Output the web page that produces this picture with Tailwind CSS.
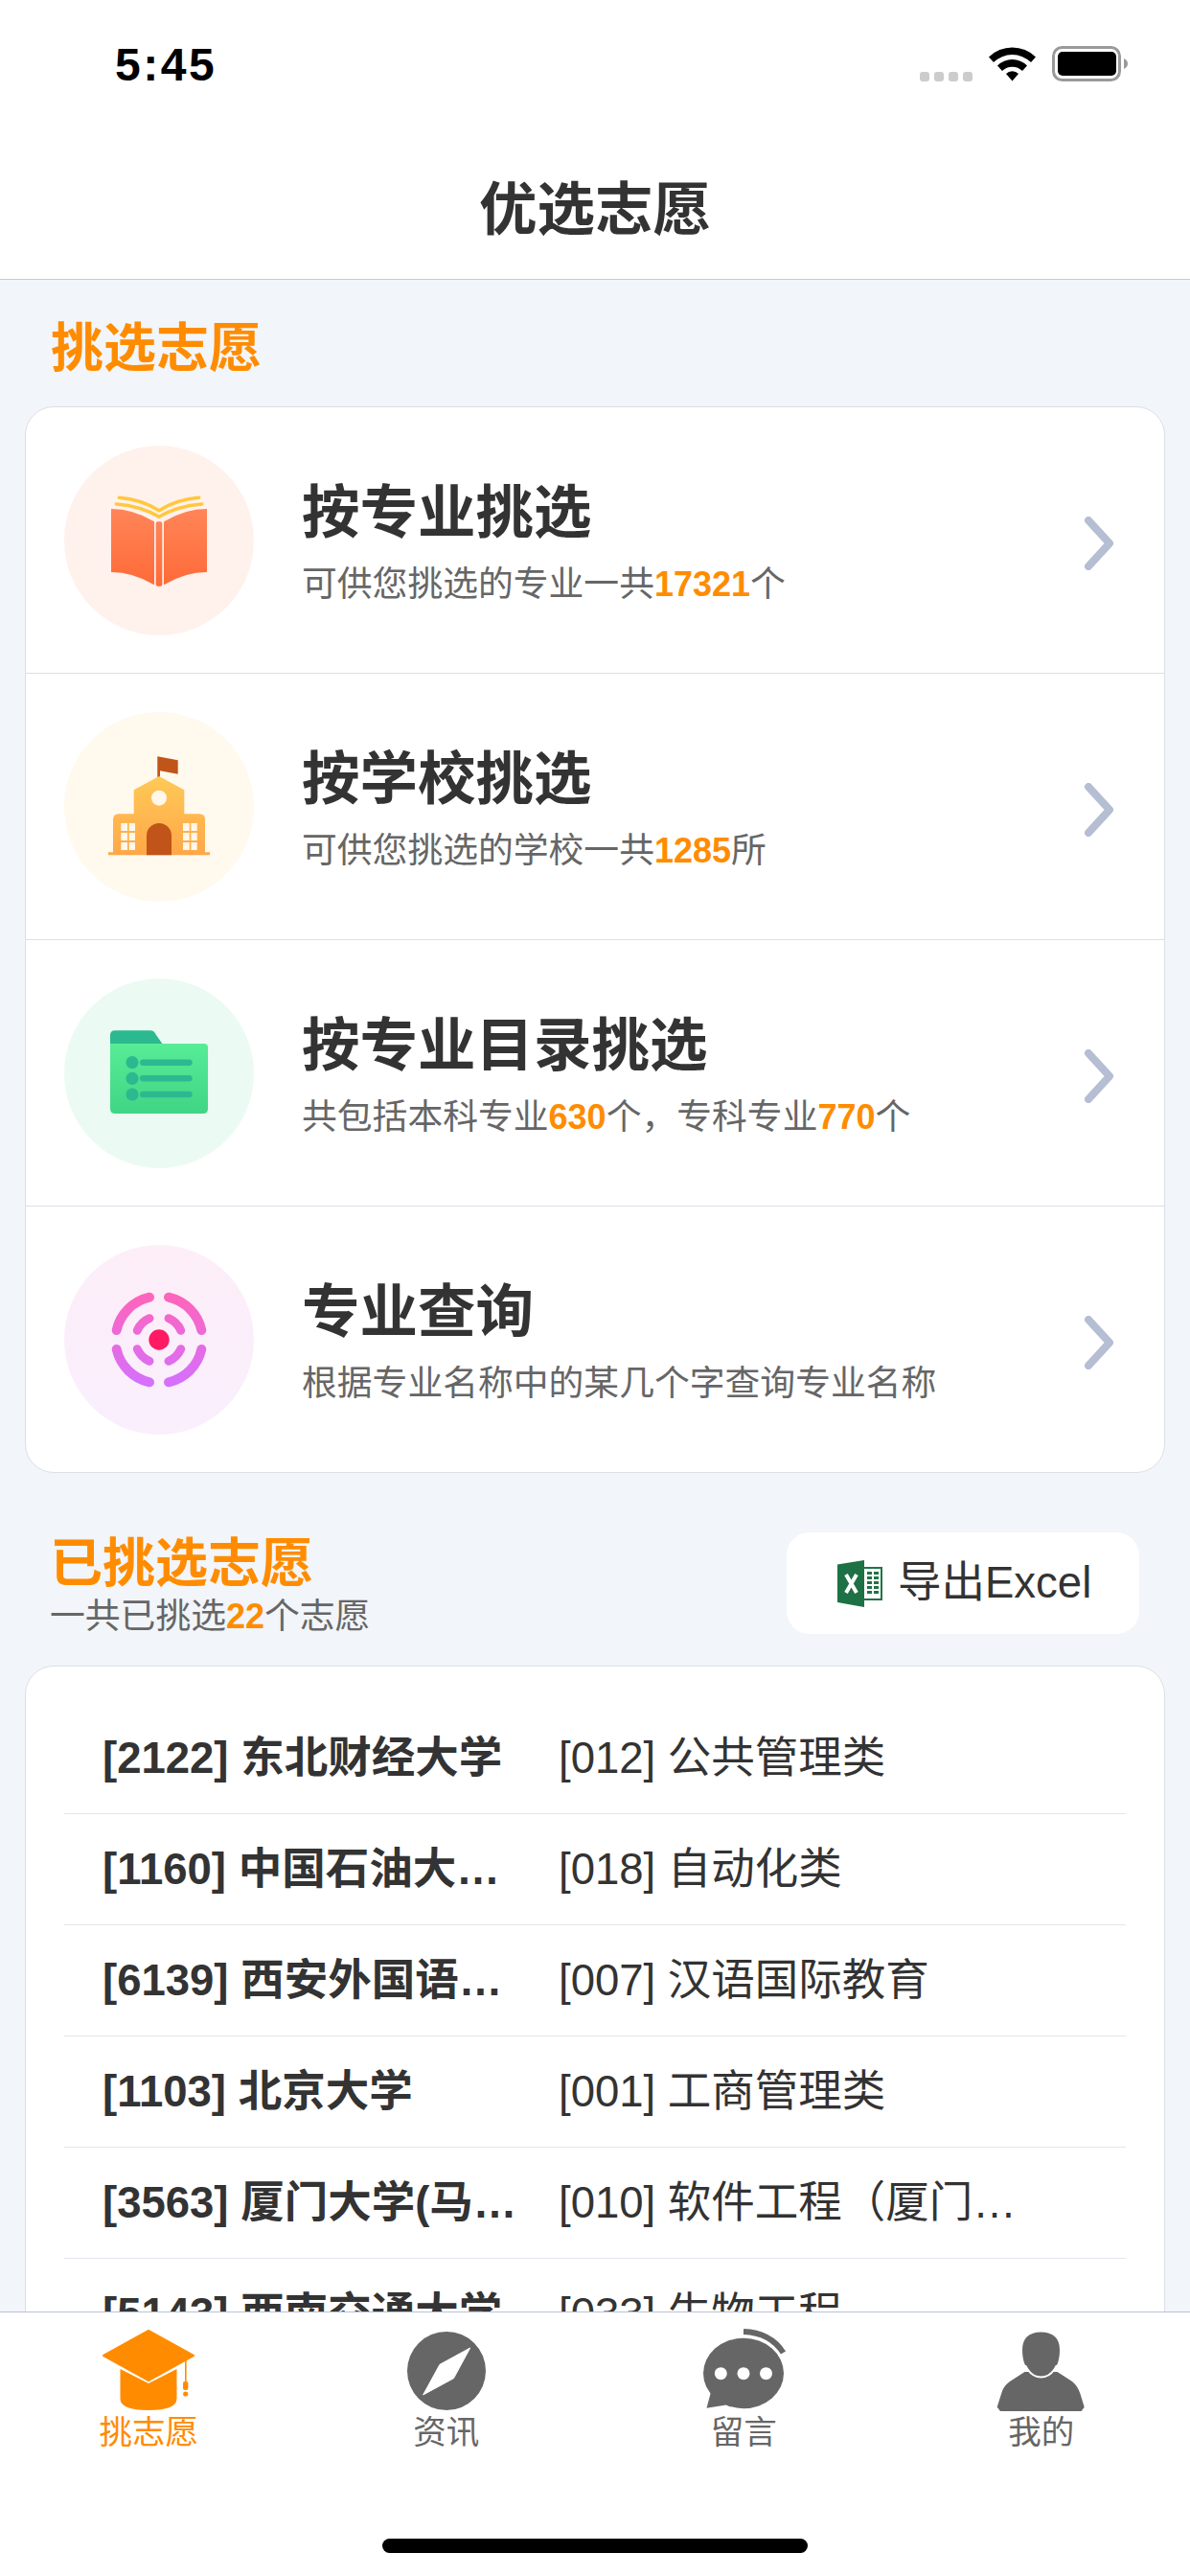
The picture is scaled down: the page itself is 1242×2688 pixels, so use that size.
<!DOCTYPE html>
<html lang="zh-CN">
<head>
<meta charset="utf-8">
<title>优选志愿</title>
<script src="https://cdn.jsdelivr.net/npm/@tailwindcss/browser@4"></script>
</head>
<body>
<div class="w-[1242px] h-[2688px] flex flex-col overflow-hidden bg-[#f2f5f9] text-[#333333] [font-family:'Liberation_Sans','Noto_Sans_CJK_SC',sans-serif]">

  <!-- status + nav -->
  <header class="h-[292px] shrink-0 bg-white border-b border-[#c5ccd8] flex flex-col">
    <div class="h-[146px] flex justify-between pl-[120px] pr-[65px] pt-[49px]">
      <span class="mt-[1px] text-[48px] leading-[36px] font-bold tracking-[2.5px] text-black">5:45</span>
      <div class="flex items-end gap-[17px] h-[36px]">
        <div class="flex gap-[5px] items-end">
          <span class="w-[10px] h-[10px] rounded-[3px] bg-[#cccccc]"></span>
          <span class="w-[10px] h-[10px] rounded-[3px] bg-[#cccccc]"></span>
          <span class="w-[10px] h-[10px] rounded-[3px] bg-[#cccccc]"></span>
          <span class="w-[10px] h-[10px] rounded-[3px] bg-[#cccccc]"></span>
        </div>
        <svg width="49" height="36" viewBox="0 0 49 36" fill="#000">
          <path d="M0 10.5A35 35 0 0 1 49 10.5L44 16A28 28 0 0 0 5 16Z"/>
          <path d="M9 19.5A22 22 0 0 1 40 19.5L35 25A15 15 0 0 0 14 25Z"/>
          <path d="M18 28A9 9 0 0 1 31 28L24.5 35.5Z"/>
        </svg>
        <svg width="79" height="37" viewBox="0 0 79 37">
          <rect x="1.5" y="1.5" width="69" height="34" rx="9" fill="none" stroke="#9a9a9a" stroke-width="3"/>
          <rect x="6" y="6" width="61" height="25" rx="5" fill="#000"/>
          <path d="M75 13C78 14.5 79 16.5 79 18.5C79 20.5 78 22.5 75 24Z" fill="#9a9a9a"/>
        </svg>
      </div>
    </div>
    <h1 class="flex-1 flex items-center justify-center text-[60.5px] leading-[72px] font-semibold">优选志愿</h1>
  </header>

  <!-- content -->
  <main class="flex-1 min-h-0 overflow-hidden">
    <h2 class="h-[132px] pt-[41px] pl-[53px] text-[55px] leading-[60px] font-semibold text-[#ff8c00]">挑选志愿</h2>

    <section class="mx-[26px] bg-white border border-[#dcdfe8] rounded-[30px]">
      <!-- row 1 -->
      <div class="h-[278px] border-b border-[#dcdfe8] flex items-center pl-[40px]">
        <svg class="shrink-0" width="198" height="198" viewBox="0 0 198 198">
          <defs><linearGradient id="bk" x1="0" y1="0" x2="0" y2="1"><stop offset="0" stop-color="#ff8558"/><stop offset="1" stop-color="#ff6a38"/></linearGradient></defs>
          <circle cx="99" cy="99" r="99" fill="#fff1ec"/>
          <path d="M49 66Q72 66 94 79.3V145.3Q72 132 49 132Z" fill="url(#bk)"/>
          <path d="M149 66Q126 66 104 79.3V145.3Q126 132 149 132Z" fill="url(#bk)"/>
          <rect x="95.7" y="79.3" width="6.6" height="67.4" rx="2" fill="url(#bk)"/>
          <path d="M57.3 54.3Q80 56 99 67.7Q118 56 140.7 54.3M54.3 61Q80 63 99 74.3Q118 63 143.7 61" fill="none" stroke="#ffc83d" stroke-width="3.5" stroke-linecap="round"/>
        </svg>
        <div class="ml-[50px] flex-1 pt-[4px]">
          <div class="text-[60.5px] leading-[70px] font-semibold">按专业挑选</div>
          <div class="mt-[18px] text-[36.8px] leading-[44px] text-[#666666]">可供您挑选的专业一共<b class="text-[36px] text-[#ff8c00]">17321</b>个</div>
        </div>
        <svg class="shrink-0 mr-[50px] mt-[6px]" width="34" height="56" viewBox="0 0 34 56"><path d="M5 4L27 28L5 52" fill="none" stroke="#b5bed2" stroke-width="8" stroke-linecap="round" stroke-linejoin="round"/></svg>
      </div>
      <!-- row 2 -->
      <div class="h-[278px] border-b border-[#dcdfe8] flex items-center pl-[40px]">
        <svg class="shrink-0" width="198" height="198" viewBox="0 0 198 198">
          <defs><linearGradient id="sc" x1="0" y1="0" x2="0" y2="1"><stop offset="0" stop-color="#ffc957"/><stop offset="1" stop-color="#ffa748"/></linearGradient></defs>
          <circle cx="99" cy="99" r="99" fill="#fff9ee"/>
          <path d="M97.3 46.3L118.7 50.3V64.7L100 61.3V68H97.3Z" fill="#c15419"/>
          <path d="M99 67L125.3 81.3V106.3H141Q147 106.3 147 112.3V146.3H152V149.3H46V146.3H51V112.3Q51 106.3 57 106.3H72.7V81.3Z" fill="url(#sc)"/>
          <circle cx="99" cy="89.7" r="8" fill="#fff7ea"/>
          <path d="M86 149.3V129A13 13 0 0 1 112 129V149.3Z" fill="#c15419"/>
          <g fill="#fff7ea">
            <rect x="59.3" y="116" width="6.7" height="8"/><rect x="67.7" y="116" width="6.3" height="8"/>
            <rect x="59.3" y="126" width="6.7" height="8"/><rect x="67.7" y="126" width="6.3" height="8"/>
            <rect x="59.3" y="136" width="6.7" height="8"/><rect x="67.7" y="136" width="6.3" height="8"/>
            <rect x="124" y="116" width="6.7" height="8"/><rect x="132.4" y="116" width="6.3" height="8"/>
            <rect x="124" y="126" width="6.7" height="8"/><rect x="132.4" y="126" width="6.3" height="8"/>
            <rect x="124" y="136" width="6.7" height="8"/><rect x="132.4" y="136" width="6.3" height="8"/>
          </g>
        </svg>
        <div class="ml-[50px] flex-1 pt-[4px]">
          <div class="text-[60.5px] leading-[70px] font-semibold">按学校挑选</div>
          <div class="mt-[18px] text-[36.8px] leading-[44px] text-[#666666]">可供您挑选的学校一共<b class="text-[36px] text-[#ff8c00]">1285</b>所</div>
        </div>
        <svg class="shrink-0 mr-[50px] mt-[6px]" width="34" height="56" viewBox="0 0 34 56"><path d="M5 4L27 28L5 52" fill="none" stroke="#b5bed2" stroke-width="8" stroke-linecap="round" stroke-linejoin="round"/></svg>
      </div>
      <!-- row 3 -->
      <div class="h-[278px] border-b border-[#dcdfe8] flex items-center pl-[40px]">
        <svg class="shrink-0" width="198" height="198" viewBox="0 0 198 198">
          <defs><linearGradient id="fd" x1="0" y1="0" x2="0" y2="1"><stop offset="0" stop-color="#57ec96"/><stop offset="1" stop-color="#40d585"/></linearGradient></defs>
          <circle cx="99" cy="99" r="99" fill="#ebfbf4"/>
          <path d="M48 70V59.3Q48 54.3 53 54.3H90Q93.5 54.3 95 57.5L103.7 70Z" fill="#2cb990"/>
          <path d="M48 68H146Q150 68 150 72V136Q150 141 145 141H53Q48 141 48 136Z" fill="url(#fd)"/>
          <g fill="#2cb990">
            <circle cx="71" cy="87.7" r="6.6"/><circle cx="71" cy="104.3" r="6.6"/><circle cx="71" cy="121" r="6.6"/>
            <rect x="79" y="84.4" width="54.7" height="6.6" rx="3.3"/><rect x="79" y="101" width="54.7" height="6.6" rx="3.3"/><rect x="79" y="117.7" width="54.7" height="6.6" rx="3.3"/>
          </g>
        </svg>
        <div class="ml-[50px] flex-1 pt-[4px]">
          <div class="text-[60.5px] leading-[70px] font-semibold">按专业目录挑选</div>
          <div class="mt-[18px] text-[36.8px] leading-[44px] text-[#666666]">共包括本科专业<b class="text-[36px] text-[#ff8c00]">630</b>个，专科专业<b class="text-[36px] text-[#ff8c00]">770</b>个</div>
        </div>
        <svg class="shrink-0 mr-[50px] mt-[6px]" width="34" height="56" viewBox="0 0 34 56"><path d="M5 4L27 28L5 52" fill="none" stroke="#b5bed2" stroke-width="8" stroke-linecap="round" stroke-linejoin="round"/></svg>
      </div>
      <!-- row 4 -->
      <div class="h-[277px] flex items-center pl-[40px]">
        <svg class="shrink-0" width="198" height="198" viewBox="0 0 198 198">
          <defs>
            <linearGradient id="tb" x1="0" y1="0" x2="0" y2="1"><stop offset="0" stop-color="#fdeef8"/><stop offset="1" stop-color="#f9effd"/></linearGradient>
            <linearGradient id="tr" gradientUnits="userSpaceOnUse" x1="99" y1="50" x2="99" y2="148"><stop offset="0" stop-color="#ff64b9"/><stop offset="1" stop-color="#d470ff"/></linearGradient>
          </defs>
          <circle cx="99" cy="99" r="99" fill="url(#tb)"/>
          <circle cx="99" cy="99" r="10.7" fill="#ff1a64"/>
          <g fill="none" stroke="url(#tr)" stroke-linecap="round">
            <path stroke-width="10" d="M89 54.7A45.4 45.4 0 0 0 54.7 89M109 54.7A45.4 45.4 0 0 1 143.3 89M89 143.3A45.4 45.4 0 0 1 54.7 109M109 143.3A45.4 45.4 0 0 0 143.3 109"/>
            <path stroke-width="9" d="M89 76.7A24.4 24.4 0 0 0 76.3 89.3M109 76.7A24.4 24.4 0 0 1 121.7 89.3M89 121.3A24.4 24.4 0 0 1 76.3 108.7M109 121.3A24.4 24.4 0 0 0 121.7 108.7"/>
          </g>
        </svg>
        <div class="ml-[50px] flex-1 pt-[4px]">
          <div class="text-[60.5px] leading-[70px] font-semibold">专业查询</div>
          <div class="mt-[18px] text-[36.8px] leading-[44px] text-[#666666]">根据专业名称中的某几个字查询专业名称</div>
        </div>
        <svg class="shrink-0 mr-[50px] mt-[6px]" width="34" height="56" viewBox="0 0 34 56"><path d="M5 4L27 28L5 52" fill="none" stroke="#b5bed2" stroke-width="8" stroke-linecap="round" stroke-linejoin="round"/></svg>
      </div>
    </section>

    <!-- chosen header -->
    <div class="h-[201px] flex justify-between pl-[52px] pr-[53px]">
      <div class="pt-[64px]">
        <div class="text-[55px] leading-[60px] font-semibold text-[#ff8c00]">已挑选志愿</div>
        <div class="mt-[4px] text-[36.8px] leading-[44px] text-[#666666]">一共已挑选<b class="text-[36px] text-[#ff8c00]">22</b>个志愿</div>
      </div>
      <div class="mt-[62px] w-[368px] h-[106px] rounded-[24px] bg-white flex items-center pl-[53px] gap-[16px]">
        <svg class="shrink-0" width="47" height="49" viewBox="0 0 47 49">
          <rect x="28" y="7" width="19" height="35" fill="#217346"/>
          <rect x="28" y="9" width="17" height="31" fill="#fff"/>
          <g fill="#217346">
            <rect x="31" y="12" width="5" height="3"/><rect x="38" y="12" width="5" height="3"/>
            <rect x="31" y="17" width="5" height="3"/><rect x="38" y="17" width="5" height="3"/>
            <rect x="31" y="22" width="5" height="3"/><rect x="38" y="22" width="5" height="3"/>
            <rect x="31" y="27" width="5" height="3"/><rect x="38" y="27" width="5" height="3"/>
            <rect x="31" y="32" width="5" height="3"/><rect x="38" y="32" width="5" height="3"/>
          </g>
          <path d="M0 4.5L28 0V49L0 44Z" fill="#1e7145"/>
          <path d="M9 15L20 34M20 15L9 34" fill="none" stroke="#fff" stroke-width="4"/>
        </svg>
        <span class="text-[45.5px] leading-[50px]">导出Excel</span>
      </div>
    </div>

    <!-- chosen list -->
    <section class="mx-[26px] bg-white border border-[#dcdfe8] rounded-[30px] pt-[38px] pb-[40px]">
      <div class="mx-[40px] h-[116px] border-b border-[#e4e6ec] flex items-center pl-[40px] text-[45.5px] leading-[56px]">
        <span class="w-[446px] font-bold truncate">[2122] 东北财经大学</span>
        <span class="ml-[30px] w-[490px] truncate">[012] 公共管理类</span>
      </div>
      <div class="mx-[40px] h-[116px] border-b border-[#e4e6ec] flex items-center pl-[40px] text-[45.5px] leading-[56px]">
        <span class="w-[446px] font-bold truncate">[1160] 中国石油大学(北京)</span>
        <span class="ml-[30px] w-[490px] truncate">[018] 自动化类</span>
      </div>
      <div class="mx-[40px] h-[116px] border-b border-[#e4e6ec] flex items-center pl-[40px] text-[45.5px] leading-[56px]">
        <span class="w-[446px] font-bold truncate">[6139] 西安外国语大学</span>
        <span class="ml-[30px] w-[490px] truncate">[007] 汉语国际教育</span>
      </div>
      <div class="mx-[40px] h-[116px] border-b border-[#e4e6ec] flex items-center pl-[40px] text-[45.5px] leading-[56px]">
        <span class="w-[446px] font-bold truncate">[1103] 北京大学</span>
        <span class="ml-[30px] w-[490px] truncate">[001] 工商管理类</span>
      </div>
      <div class="mx-[40px] h-[116px] border-b border-[#e4e6ec] flex items-center pl-[40px] text-[45.5px] leading-[56px]">
        <span class="w-[446px] font-bold truncate">[3563] 厦门大学(马来西亚分校)</span>
        <span class="ml-[30px] w-[490px] truncate">[010] 软件工程（厦门大学）</span>
      </div>
      <div class="mx-[40px] h-[116px] flex items-center pl-[40px] text-[45.5px] leading-[56px]">
        <span class="w-[446px] font-bold truncate">[5143] 西南交通大学</span>
        <span class="ml-[30px] w-[490px] truncate">[033] 生物工程</span>
      </div>
    </section>
  </main>

  <!-- tab bar -->
  <nav class="relative h-[276px] shrink-0 bg-white border-t border-[#b8c2d8] grid grid-cols-4 pt-[17px] text-[34.5px] leading-[36px] text-[#666666]">
    <div class="flex flex-col items-center text-[#ff8c00]">
      <svg width="120" height="90" viewBox="0 0 120 90" fill="#ff8c00">
        <path d="M60 2L107 28L60 54L13 28Z" stroke="#ff8c00" stroke-width="2" stroke-linejoin="round"/>
        <path d="M30.5 42L60 57L89.5 42V73Q89.5 85 60 85Q30.5 85 30.5 73Z"/>
        <rect x="98" y="33" width="1.6" height="22"/>
        <rect x="96" y="55" width="5.4" height="9" rx="2"/>
        <circle cx="98.7" cy="68" r="2.6"/>
      </svg>
      <span>挑志愿</span>
    </div>
    <div class="flex flex-col items-center">
      <svg width="120" height="90" viewBox="0 0 120 90">
        <circle cx="60" cy="44" r="41" fill="#666666"/>
        <path d="M84.7 20L67.5 51.7L35.6 69L53 37.3Z" fill="#fff" stroke="#fff" stroke-width="1" stroke-linejoin="round"/>
      </svg>
      <span>资讯</span>
    </div>
    <div class="flex flex-col items-center">
      <svg width="120" height="90" viewBox="0 0 120 90" fill="#666666">
        <ellipse cx="60" cy="46.5" rx="42" ry="36.7"/>
        <path d="M21.5 82.7L26 66L42 79.5Z"/>
        <path d="M60 3Q88 4 101.5 25" fill="none" stroke="#666666" stroke-width="6"/>
        <circle cx="36.3" cy="46.7" r="6.5" fill="#fff"/>
        <circle cx="60" cy="46.7" r="6.5" fill="#fff"/>
        <circle cx="83.5" cy="46.7" r="6.5" fill="#fff"/>
      </svg>
      <span>留言</span>
    </div>
    <div class="flex flex-col items-center">
      <svg width="120" height="90" viewBox="0 0 120 90" fill="#666666">
        <path d="M42.5 45L27 55Q20 60 18 68L13.7 81.7L17 86H101.6L104.7 81.7L100.5 68Q98 60 92 55L76.5 45Z"/>
        <path d="M59.5 3.5C72 3.5 79 10 79 22C79 38 71 50.5 59.5 50.5C48 50.5 40 38 40 22C40 10 47 3.5 59.5 3.5Z" stroke="#fff" stroke-width="2"/>
        <path d="M59.5 3.5C72 3.5 79 10 79 22C79 28 78 34 76 38H43C41 34 40 28 40 22C40 10 47 3.5 59.5 3.5Z"/>
      </svg>
      <span>我的</span>
    </div>
    <span class="absolute left-[399px] top-[236px] w-[444px] h-[15px] rounded-full bg-black"></span>
  </nav>
</div>
</body>
</html>
